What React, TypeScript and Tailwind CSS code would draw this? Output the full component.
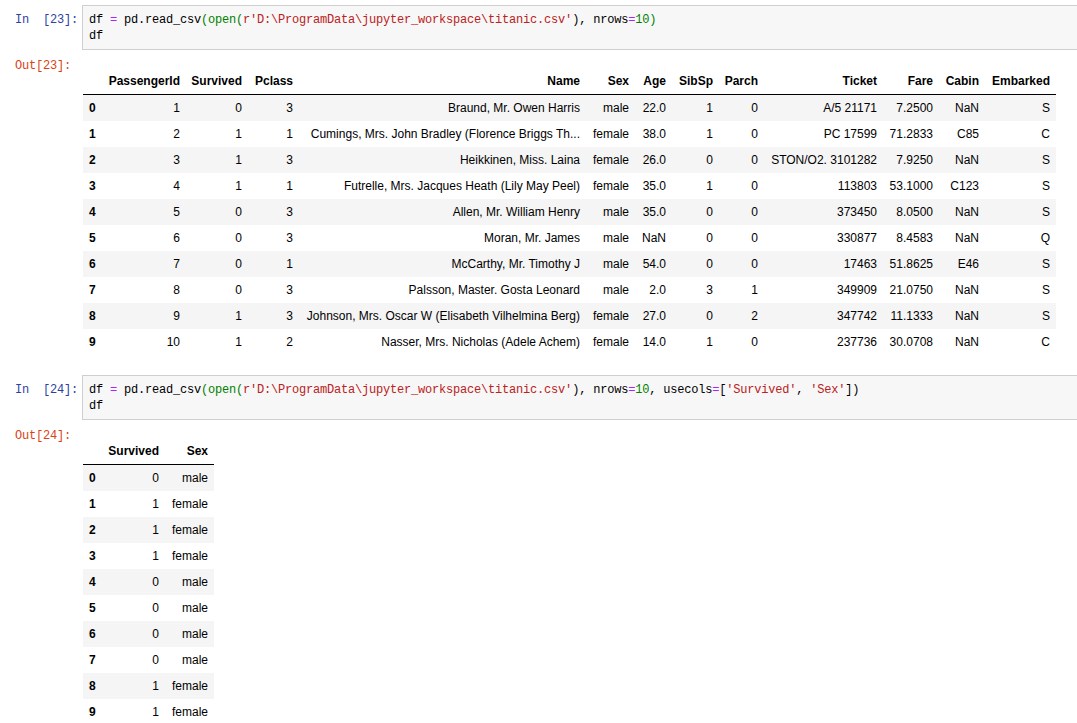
import React from 'react';

type Cell = string | number;

const titanicCols = ['PassengerId', 'Survived', 'Pclass', 'Name', 'Sex', 'Age', 'SibSp', 'Parch', 'Ticket', 'Fare', 'Cabin', 'Embarked'];
// column widths as the notebook laid them out (index column first)
const titanicWidths = ['w-[20px]', 'w-[83px]', 'w-[62px]', 'w-[51px]', 'w-[287px]', 'w-[49px]', 'w-[37px]', 'w-[47px]', 'w-[45px]', 'w-[119px]', 'w-[56px]', 'w-[46px]', 'w-[71px]'];

const titanicRows: Cell[][] = [
  [1, 0, 3, 'Braund, Mr. Owen Harris', 'male', '22.0', 1, 0, 'A/5 21171', '7.2500', 'NaN', 'S'],
  [2, 1, 1, 'Cumings, Mrs. John Bradley (Florence Briggs Th...', 'female', '38.0', 1, 0, 'PC 17599', '71.2833', 'C85', 'C'],
  [3, 1, 3, 'Heikkinen, Miss. Laina', 'female', '26.0', 0, 0, 'STON/O2. 3101282', '7.9250', 'NaN', 'S'],
  [4, 1, 1, 'Futrelle, Mrs. Jacques Heath (Lily May Peel)', 'female', '35.0', 1, 0, '113803', '53.1000', 'C123', 'S'],
  [5, 0, 3, 'Allen, Mr. William Henry', 'male', '35.0', 0, 0, '373450', '8.0500', 'NaN', 'S'],
  [6, 0, 3, 'Moran, Mr. James', 'male', 'NaN', 0, 0, '330877', '8.4583', 'NaN', 'Q'],
  [7, 0, 1, 'McCarthy, Mr. Timothy J', 'male', '54.0', 0, 0, '17463', '51.8625', 'E46', 'S'],
  [8, 0, 3, 'Palsson, Master. Gosta Leonard', 'male', '2.0', 3, 1, '349909', '21.0750', 'NaN', 'S'],
  [9, 1, 3, 'Johnson, Mrs. Oscar W (Elisabeth Vilhelmina Berg)', 'female', '27.0', 0, 2, '347742', '11.1333', 'NaN', 'S'],
  [10, 1, 2, 'Nasser, Mrs. Nicholas (Adele Achem)', 'female', '14.0', 1, 0, '237736', '30.0708', 'NaN', 'C'],
];

const smallRows: Cell[][] = [
  [0, 'male'], [1, 'female'], [1, 'female'], [1, 'female'], [0, 'male'],
  [0, 'male'], [0, 'male'], [0, 'male'], [1, 'female'], [1, 'female'],
];

const mono = "font-['Liberation_Mono','Courier_New',monospace] text-[12px] tracking-[-0.2px] leading-[16px]";

// syntax colours as in the notebook's code mirror theme
const Op = ({ children }: { children: React.ReactNode }) => <span className="text-[#aa22ff]">{children}</span>;
const Grn = ({ children }: { children: React.ReactNode }) => <span className="text-[#008000]">{children}</span>;
const Str = ({ children }: { children: React.ReactNode }) => <span className="text-[#ba2121]">{children}</span>;

// right aligned, and a label a bit wider than its column spills to the left
const R = ({ children }: { children: React.ReactNode }) => (
  <div className="flex justify-end whitespace-nowrap">{children}</div>
);

const DataFrame: React.FC<{ columns: string[]; rows: Cell[][]; widths: string[]; tableWidth: string }> = ({ columns, rows, widths, tableWidth }) => (
  <table className={`table-fixed border-collapse text-[12px] leading-[14px] text-black font-['Liberation_Sans',Arial,sans-serif] ${tableWidth}`}>
    <colgroup>
      {widths.map((w, i) => (
        <col key={i} className={w} />
      ))}
    </colgroup>
    <thead>
      <tr>
        <th className="border-b border-black p-[6px]"></th>
        {columns.map((c) => (
          <th key={c} className="border-b border-black p-[6px] font-bold">
            <R>{c}</R>
          </th>
        ))}
      </tr>
    </thead>
    <tbody>
      {rows.map((r, i) => (
        <tr key={i} className={i % 2 === 0 ? 'bg-[#f5f5f5]' : ''}>
          <th className="p-[6px] text-left font-bold">{i}</th>
          {r.map((v, j) => (
            <td key={j} className="p-[6px]">
              <R>{v}</R>
            </td>
          ))}
        </tr>
      ))}
    </tbody>
  </table>
);

const InputCell: React.FC<{ n: number; children: React.ReactNode }> = ({ n, children }) => (
  <div className="flex">
    <div className={`w-[82px] shrink-0 pl-[15px] pt-[7px] text-[#303f9f] whitespace-pre ${mono}`}>{`In  [${n}]:`}</div>
    <div className={`flex-1 border border-[#cfcfcf] bg-[#f7f7f7] pl-[6px] pt-[6px] pb-[5px] text-black whitespace-pre ${mono}`}>
      {children}
    </div>
  </div>
);

const OutputCell: React.FC<{ n: number; children: React.ReactNode }> = ({ n, children }) => (
  <div className="flex">
    <div className={`w-[82px] shrink-0 pl-[15px] pt-[8px] text-[#d84315] ${mono}`}>{`Out[${n}]:`}</div>
    <div className="flex-1 pl-px pt-[18px]">{children}</div>
  </div>
);

export default function App() {
  return (
    <div className="w-full h-[723px] overflow-hidden bg-white">
      <div className="w-[1100px] pt-[5px]">
        <InputCell n={23}>
          <div>
            df <Op>=</Op> pd.read_csv<Grn>(open(</Grn>
            <Str>r'D:\ProgramData\jupyter_workspace\titanic.csv'</Str>), nrows<Op>=</Op>
            <Grn>10)</Grn>
          </div>
          <div>df</div>
        </InputCell>
        <OutputCell n={23}>
          <DataFrame columns={titanicCols} rows={titanicRows} widths={titanicWidths} tableWidth="w-[973px]" />
        </OutputCell>

        <div className="mt-[20px]">
          <InputCell n={24}>
            <div>
              df <Op>=</Op> pd.read_csv<Grn>(open(</Grn>
              <Str>r'D:\ProgramData\jupyter_workspace\titanic.csv'</Str>), nrows<Op>=</Op>
              <Grn>10</Grn>, usecols<Op>=</Op>[<Str>'Survived'</Str>, <Str>'Sex'</Str>])
            </div>
            <div>df</div>
          </InputCell>
          <OutputCell n={24}>
            <DataFrame
              columns={['Survived', 'Sex']}
              rows={smallRows}
              widths={['w-[20px]', 'w-[62px]', 'w-[49px]']}
              tableWidth="w-[131px]"
            />
          </OutputCell>
        </div>
      </div>
    </div>
  );
}
